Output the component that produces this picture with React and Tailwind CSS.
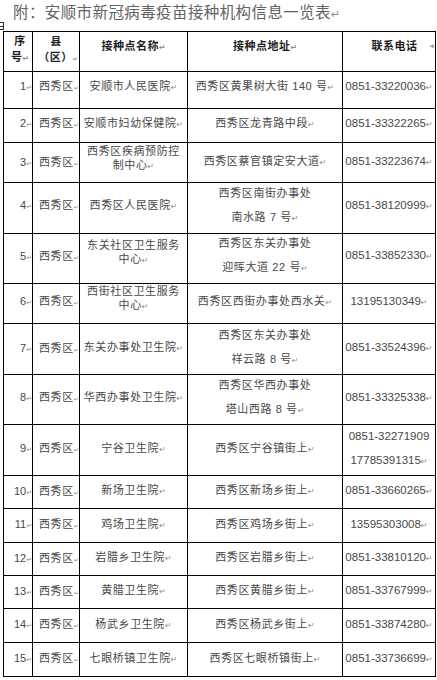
import React from "react";

const rows = [
  [1, 37, ["安顺市人民医院"], ["西秀区黄果树大街 140 号"], ["0851-33220036"], 7],
  [2, 34, ["安顺市妇幼保健院"], ["西秀区龙青路中段"], ["0851-33322265"], 4],
  [3, 40, ["西秀区疾病预防控", "制中心"], ["西秀区蔡官镇定安大道"], ["0851-33223674"], 1],
  [4, 51, ["西秀区人民医院"], ["西秀区南街办事处", "南水路 7 号"], ["0851-38120999"], 5],
  [5, 50, ["东关社区卫生服务", "中心"], ["西秀区东关办事处", "迎晖大道 22 号"], ["0851-33852330"], 5],
  [6, 40, ["西街社区卫生服务", "中心"], ["西秀区西街办事处西水关"], ["13195130349"], 4],
  [7, 51, ["东关办事处卫生院"], ["西秀区东关办事处", "祥云路 8 号"], ["0851-33524396"], 2],
  [8, 50, ["华西办事处卫生院"], ["西秀区华西办事处", "塔山西路 8 号"], ["0851-33325338"], 4],
  [9, 51, ["宁谷卫生院"], ["西秀区宁谷镇街上"], ["0851-32271909", "17785391315"], 3],
  [10, 33, ["新场卫生院"], ["西秀区新场乡街上"], ["0851-33660265"], 2],
  [11, 34, ["鸡场卫生院"], ["西秀区鸡场乡街上"], ["13595303008"], 2],
  [12, 33, ["岩腊乡卫生院"], ["西秀区岩腊乡街上"], ["0851-33810120"], 2],
  [13, 33, ["黄腊卫生院"], ["西秀区黄腊乡街上"], ["0851-33767999"], 2],
  [14, 34, ["杨武乡卫生院"], ["西秀区杨武乡街上"], ["0851-33874280"], 2],
  [15, 34, ["七眼桥镇卫生院"], ["西秀区七眼桥镇街上"], ["0851-33736699"], 2],
];

function Ret({ size = "text-[8px]" }) {
  return (
    <span className={`font-[family-name:'DejaVu_Sans',sans-serif] ${size} text-[#8c8c8c] tracking-normal`}>
      ↵
    </span>
  );
}

function Lines({ lines, leading }) {
  return lines.map((l, i) => (
    <div key={i} className={`whitespace-nowrap ${leading}`}>
      {l}
      {i === lines.length - 1 && <Ret />}
    </div>
  ));
}

const cell = "border-r border-black overflow-hidden flex flex-col justify-center";

export default function App() {
  return (
    <div className="w-[437px] h-[680px] bg-white font-[family-name:'Liberation_Sans','Noto_Sans_CJK_SC',sans-serif] text-[#474747]">
      <div className="relative h-[31px] pl-[13px] pt-[3px]">
        <div className="text-[15.5px] leading-[20px] tracking-[0.4px] text-[#626262] whitespace-nowrap">
          附：安顺市新冠病毒疫苗接种机构信息一览表
          <span className="font-[family-name:'DejaVu_Sans',sans-serif] text-[11px] text-[#8c8c8c]">↵</span>
        </div>
        <div className="absolute left-0 top-[22px] w-[4px] h-[8px] border-r border-t border-b border-[#333] flex items-center">
          <div className="w-[3px] h-[1px] bg-[#333]" />
        </div>
      </div>

      <div className="ml-[3px] w-[433px] border-l border-t border-black">
        <div className="grid grid-cols-[29px_47px_108px_155px_93px] h-[40px] border-b border-black font-bold text-[#1e1e1e] text-[11px] tracking-[0.5px]">
          <div className={`${cell} items-center pl-[4px] pb-[4px] leading-[16px]`}>
            <div>序</div>
            <div className="whitespace-nowrap">号<Ret /></div>
          </div>
          <div className={`${cell} items-center pb-[4px] leading-[16px]`}>
            <div>县</div>
            <div className="whitespace-nowrap pl-[4px]">（区）<Ret size="text-[6px]" /></div>
          </div>
          <div className={`${cell} items-center pb-[10px]`}>
            <div className="whitespace-nowrap">接种点名称<Ret /></div>
          </div>
          <div className={`${cell} items-center pb-[10px]`}>
            <div className="whitespace-nowrap">接种点地址<Ret /></div>
          </div>
          <div className={`${cell} flex-row items-center justify-end pb-[10px] pr-[1px] gap-[12px]`}>
            <div className="whitespace-nowrap">联系电话</div>
            <span className="text-[7px] text-[#9a9a9a]">◂</span>
          </div>
        </div>

        {rows.map(([n, h, name, addr, tel, lift]) => (
          <div
            key={n}
            className="grid grid-cols-[29px_47px_108px_155px_93px] border-b border-black text-[11px] tracking-[0.6px]"
            style={{ height: h }}
          >
            <div className={`${cell} items-end`} style={{ paddingBottom: lift }}>
              <div className="whitespace-nowrap tracking-normal text-[11px]">
                {n}
                <Ret size="text-[7px]" />
              </div>
            </div>
            <div className={`${cell} items-start pl-[6px]`} style={{ paddingBottom: lift }}>
              <div className="whitespace-nowrap">
                西秀区
                <Ret size="text-[6px]" />
              </div>
            </div>
            <div
              className={`${cell} items-center text-center`}
              style={{ paddingBottom: name.length > 1 ? lift + 6 : lift }}
            >
              <Lines lines={name} leading="leading-[14px]" />
            </div>
            <div className={`${cell} items-center text-center`} style={{ paddingBottom: lift }}>
              <Lines lines={addr} leading={addr.length > 1 ? "leading-[24px]" : "leading-[14px]"} />
            </div>
            <div
              className={`${cell} items-center text-center tracking-normal text-[11.5px]`}
              style={{ paddingBottom: lift }}
            >
              <Lines lines={tel} leading={tel.length > 1 ? "leading-[24px]" : "leading-[14px]"} />
            </div>
          </div>
        ))}
      </div>
    </div>
  );
}
